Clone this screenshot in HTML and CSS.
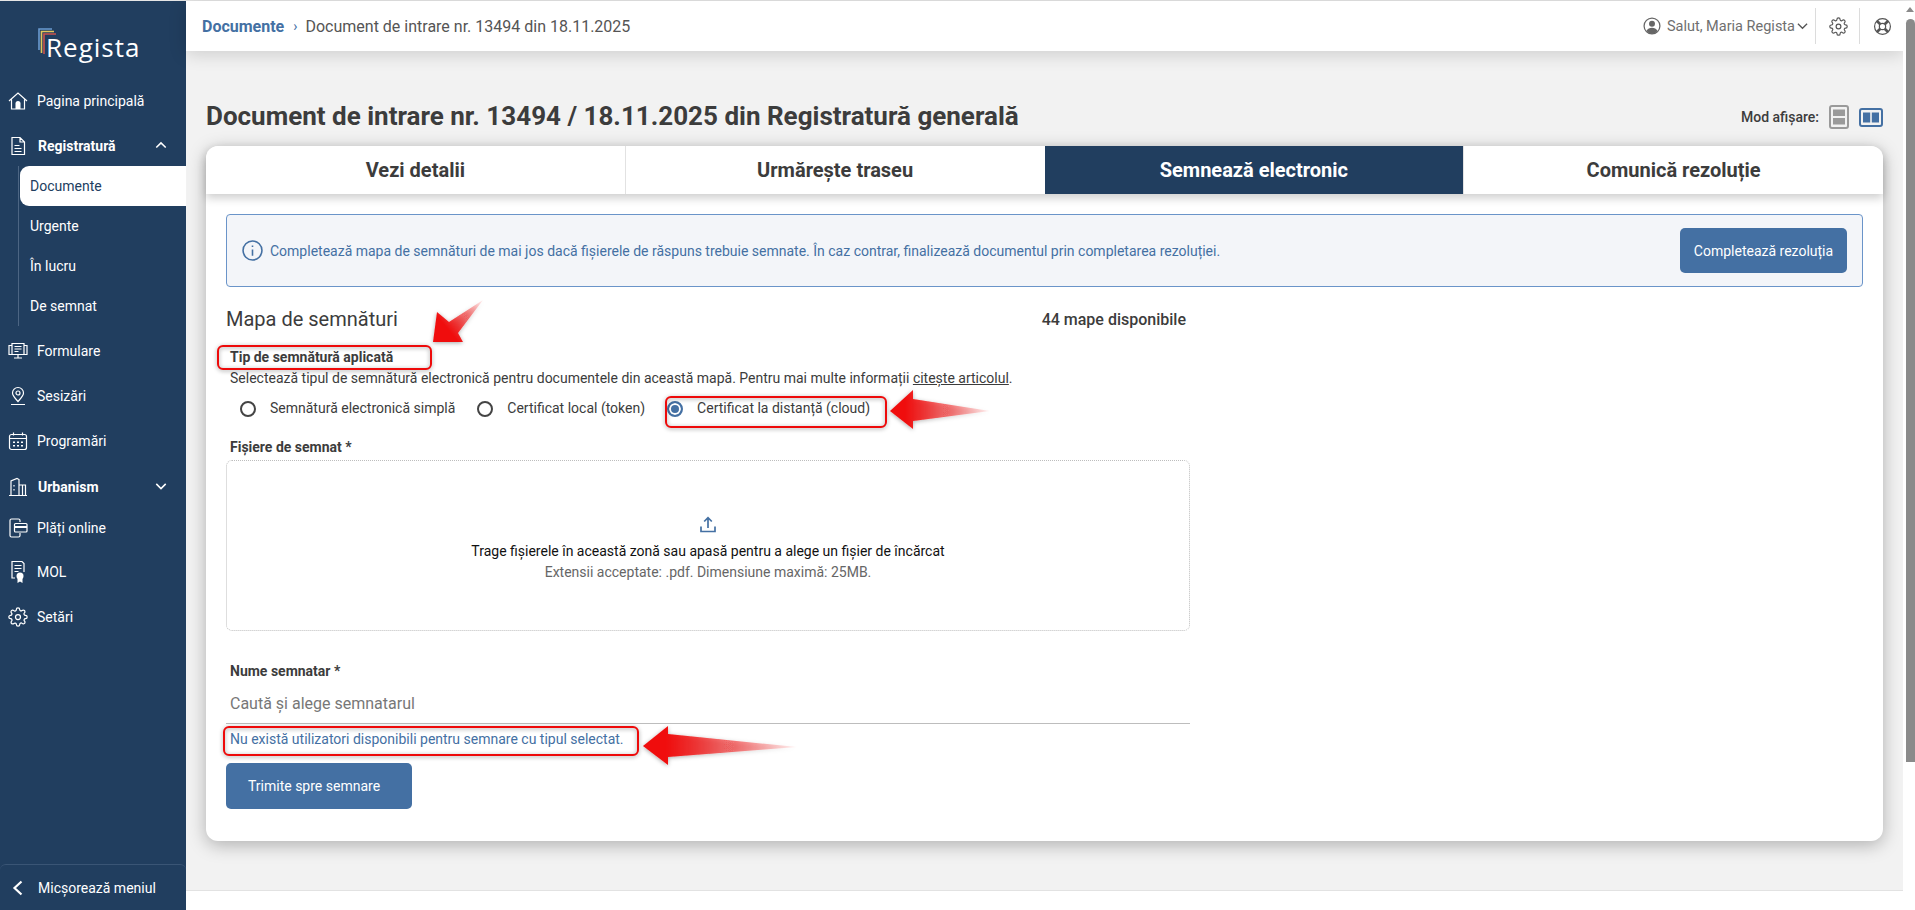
FILE: index.html
```html
<!DOCTYPE html>
<html lang="ro">
<head>
<meta charset="utf-8">
<title>Document de intrare nr. 13494</title>
<link rel="stylesheet" href="styles.css">
</head>
<body>
<svg class="defs" width="0" height="0" aria-hidden="true">
  <defs>
    <symbol id="gear" viewBox="0 0 24 24"><circle cx="12" cy="12" r="3"/><path d="M19.4 15a1.65 1.65 0 0 0 .33 1.82l.06.06a2 2 0 0 1 0 2.83 2 2 0 0 1-2.83 0l-.06-.06a1.65 1.65 0 0 0-1.82-.33 1.65 1.65 0 0 0-1 1.51V21a2 2 0 0 1-2 2 2 2 0 0 1-2-2v-.09A1.65 1.65 0 0 0 9 19.4a1.65 1.65 0 0 0-1.82.33l-.06.06a2 2 0 0 1-2.83 0 2 2 0 0 1 0-2.83l.06-.06a1.65 1.65 0 0 0 .33-1.82 1.65 1.65 0 0 0-1.51-1H3a2 2 0 0 1-2-2 2 2 0 0 1 2-2h.09A1.65 1.65 0 0 0 4.6 9a1.65 1.65 0 0 0-.33-1.82l-.06-.06a2 2 0 0 1 0-2.83 2 2 0 0 1 2.83 0l.06.06a1.65 1.65 0 0 0 1.82.33H9a1.65 1.65 0 0 0 1-1.51V3a2 2 0 0 1 2-2 2 2 0 0 1 2 2v.09a1.65 1.65 0 0 0 1 1.51 1.65 1.65 0 0 0 1.82-.33l.06-.06a2 2 0 0 1 2.83 0 2 2 0 0 1 0 2.83l-.06.06a1.65 1.65 0 0 0-.33 1.82V9a1.65 1.65 0 0 0 1.51 1H21a2 2 0 0 1 2 2 2 2 0 0 1-2 2h-.09a1.65 1.65 0 0 0-1.51 1z"/></symbol>
    <linearGradient id="fade1" gradientUnits="userSpaceOnUse" x1="433" y1="342" x2="483" y2="300"><stop offset="0.3" stop-color="#f00c0c"/><stop offset="1" stop-color="#f00c0c" stop-opacity="0.05"/></linearGradient>
    <linearGradient id="fade2" gradientUnits="userSpaceOnUse" x1="890" y1="411" x2="990" y2="411"><stop offset="0.15" stop-color="#f00c0c"/><stop offset="1" stop-color="#f00c0c" stop-opacity="0.05"/></linearGradient>
    <linearGradient id="fade3" gradientUnits="userSpaceOnUse" x1="643" y1="746" x2="797" y2="746"><stop offset="0.15" stop-color="#f00c0c"/><stop offset="1" stop-color="#f00c0c" stop-opacity="0.05"/></linearGradient>
    <filter id="soft" x="-20%" y="-40%" width="140%" height="180%"><feDropShadow dx="0" dy="1" stdDeviation="2" flood-color="#000" flood-opacity="0.35"/></filter>
  </defs>
</svg>

<div class="app">
  <aside class="sidebar">
    <div class="logo">
      <svg class="logo-mark" width="22" height="28" viewBox="0 0 22 28" fill="none" stroke-width="1.6">
        <path d="M14 1H1v21" stroke="#6a9ad0"/>
        <path d="M16 3.500H3.500V25" stroke="#e3c55a"/>
        <path d="M18 6H6v20" stroke="#c9524f"/>
      </svg>
      <span class="logo-text">Regista</span>
    </div>
    <nav class="nav">
      <a class="nav-item">
        <svg class="ni" viewBox="0 0 20 20"><path d="M1 10 10 2l9 8M3.500 8.500V18h13V8.500"/><path class="solid" d="M7.500 18v-5.500a2.500 2.500 0 0 1 5 0V18z"/></svg>
        <span>Pagina principală</span>
      </a>
      <a class="nav-item nav-group nav-reg">
        <svg class="ni" viewBox="0 0 20 20"><path d="M4 1.500h8l4.500 4.500v12.500H4zM12 1.500V6h4.500M6.500 9.500h5M6.500 12.500h7M6.500 15.500h7"/></svg>
        <span>Registratură</span>
        <svg class="chev" viewBox="0 0 14 8"><path d="M1.500 7 7 1.500 12.500 7"/></svg>
      </a>
      <div class="subnav">
        <a class="sub-item sub-active">Documente</a>
        <a class="sub-item">Urgente</a>
        <a class="sub-item">În lucru</a>
        <a class="sub-item">De semnat</a>
      </div>
      <a class="nav-item nav-after">
        <svg class="ni" viewBox="0 0 20 20"><path d="M4 2.500h12v11H4zM4 4.500H1v9h3M16 4.500h3v9h-3M6.500 5.500h7M6.500 8h7M6.500 10.500h4M10 13.500v3M6 17h8"/></svg>
        <span>Formulare</span>
      </a>
      <a class="nav-item">
        <svg class="ni" viewBox="0 0 20 20"><path d="M10 15.500C7 12 4.500 9.800 4.500 7a5.500 5.500 0 0 1 11 0c0 2.800-2.500 5-5.500 8.500zM3 18.500h14"/><circle cx="10" cy="7" r="2"/></svg>
        <span>Sesizări</span>
      </a>
      <a class="nav-item">
        <svg class="ni" viewBox="0 0 20 20"><rect x="1.500" y="3.500" width="17" height="15" rx="2"/><path d="M1.500 7.500h17M5.500 1.500v3M14.500 1.500v3"/><path class="dots" d="M5 10.500h2v1.500H5zM9 10.500h2v1.500H9zM13 10.500h2v1.500h-2zM5 14h2v1.500H5zM9 14h2v1.500H9zM13 14h2v1.500h-2z"/></svg>
        <span>Programări</span>
      </a>
      <a class="nav-item nav-group nav-urb">
        <svg class="ni" viewBox="0 0 20 20"><path d="M3 18.500V4l6-2.500 2 1v16M11 8h6.500v10.500M1 18.500h18M14.500 8v10.500M6 8v1.500M6 12v1.500"/></svg>
        <span>Urbanism</span>
        <svg class="chev" viewBox="0 0 14 8"><path d="M1.500 1.500 7 7l5.500-5.500"/></svg>
      </a>
      <a class="nav-item nav-pay">
        <svg class="ni" viewBox="0 0 20 20"><path d="M12 4V2.500a1.500 1.500 0 0 0-1.500-1.500h-7A1.500 1.500 0 0 0 2 2.500v15A1.500 1.500 0 0 0 3.500 19h7a1.500 1.500 0 0 0 1.500-1.500V15"/><rect x="6.500" y="5.500" width="12.500" height="8.500" rx="1"/><path class="solid" d="M6.500 8h12.500v2H6.500z"/></svg>
        <span>Plăți online</span>
      </a>
      <a class="nav-item">
        <svg class="ni ni-tall" viewBox="0 0 20 24"><path d="M7 18H4V1.500h10l2 2V12M6.500 5.500h7M6.500 8.500h7M6.500 11.500h4"/><circle class="solid" cx="12" cy="16" r="3.500"/><path class="solid" d="M9.500 18.500v4.500l2.500-1.500 2.500 1.500v-4.500z"/></svg>
        <span>MOL</span>
      </a>
      <a class="nav-item">
        <svg class="ni ni-gear" viewBox="0 0 24 24"><use href="#gear"/></svg>
        <span>Setări</span>
      </a>
    </nav>
    <a class="collapse">
      <svg class="collapse-ic" viewBox="0 0 12 16"><path d="M9.500 1.500 2.500 8l7 6.500"/></svg>
      <span>Micșorează meniul</span>
    </a>
  </aside>

  <div class="main">
    <header class="topbar">
      <div class="crumbs">
        <a class="crumb-link">Documente</a>
        <span class="crumb-sep">›</span>
        <span>Document de intrare nr. 13494 din 18.11.2025</span>
      </div>
      <div class="top-right">
        <svg class="user-ic" viewBox="0 0 20 20"><circle class="ring" cx="10" cy="10" r="8.800"/><circle cx="10" cy="7.500" r="3.300"/><path d="M3.800 15.500C5 12.800 7.500 12 10 12s5 .8 6.200 3.500A8.800 8.800 0 0 1 10 18.800a8.800 8.800 0 0 1-6.200-3.300z"/></svg>
        <span class="hello">Salut, Maria Regista</span>
        <svg class="top-chev" viewBox="0 0 12 8"><path d="M1 1.500 6 6.500l5-5"/></svg>
        <span class="top-btn top-btn-first">
          <svg class="top-ic" viewBox="0 0 24 24"><use href="#gear"/></svg>
        </span>
        <span class="top-btn">
          <svg class="top-ic top-help" viewBox="0 0 24 24"><circle cx="12" cy="12" r="10"/><circle cx="12" cy="12" r="4"/><path class="band" d="M5 5l4.200 4.200M19 5l-4.200 4.200M5 19l4.200-4.200M19 19l-4.200-4.200"/></svg>
        </span>
      </div>
    </header>

    <section class="content">
      <div class="title-row">
        <h1 class="title">Document de intrare nr. 13494 / 18.11.2025 din Registratură generală</h1>
        <div class="mode">
          <span>Mod afișare:</span>
          <svg class="mode-a" viewBox="0 0 20 24"><rect x="1" y="1" width="18" height="22" rx="2"/><path d="M4 4.500h12v6.500H4zM4 13h12v6.500H4z"/></svg>
          <svg class="mode-b" viewBox="0 0 24 19"><rect x="1" y="1" width="22" height="17" rx="2"/><path d="M4 4.500h7.200v10H4zM12.800 4.500H20v10h-7.200z"/></svg>
        </div>
      </div>

      <div class="card">
        <div class="tabs">
          <a class="tab">Vezi detalii</a>
          <a class="tab">Urmărește traseu</a>
          <a class="tab tab-active">Semnează electronic</a>
          <a class="tab">Comunică rezoluție</a>
        </div>
        <div class="card-body">
          <div class="alert">
            <svg class="alert-ic" viewBox="0 0 20 20"><circle cx="10" cy="10" r="9"/><path d="M10 9v6M10 5.200v1.400"/></svg>
            <span class="alert-text">Completează mapa de semnături de mai jos dacă fișierele de răspuns trebuie semnate. În caz contrar, finalizează documentul prin completarea rezoluției.</span>
            <a class="btn btn-alert">Completează rezoluția</a>
          </div>

          <div class="form">
            <div class="form-head">
              <h2 class="form-title">Mapa de semnături</h2>
              <span class="form-count">44 mape disponibile</span>
            </div>
            <div class="label label-type">Tip de semnătură aplicată</div>
            <p class="desc">Selectează tipul de semnătură electronică pentru documentele din această mapă. Pentru mai multe informații <a class="link">citește articolul</a>.</p>
            <div class="radios">
              <label class="radio"><span class="radio-dot"></span>Semnătură electronică simplă</label>
              <label class="radio"><span class="radio-dot"></span>Certificat local (token)</label>
              <label class="radio radio-on"><span class="radio-dot"></span>Certificat la distanță (cloud)</label>
            </div>
            <div class="label label-files">Fișiere de semnat *</div>
            <div class="drop">
              <svg class="drop-ic" viewBox="0 0 16 17"><path d="M8 12V2M4.200 5.500 8 1.700l3.800 3.800M1 10.500v5h14v-5"/></svg>
              <div class="drop-main">Trage fișierele în această zonă sau apasă pentru a alege un fișier de încărcat</div>
              <div class="drop-sub">Extensii acceptate: .pdf. Dimensiune maximă: 25MB.</div>
            </div>
            <div class="label label-name">Nume semnatar *</div>
            <div class="field">Caută și alege semnatarul</div>
            <div class="hint">Nu există utilizatori disponibili pentru semnare cu tipul selectat.</div>
            <a class="btn btn-send">Trimite spre semnare</a>
          </div>
        </div>
      </div>
    </section>

    <footer class="footer"></footer>
  </div>

  <div class="scrollbar">
    <span class="scroll-arrow"></span>
    <span class="scroll-thumb"></span>
  </div>
</div>

<svg class="marks" width="1915" height="910" viewBox="0 0 1915 910" aria-hidden="true">
  <g class="mark-box">
    <rect x="218" y="346" width="213" height="23" rx="5"/>
    <rect x="666" y="397" width="220" height="30" rx="5"/>
    <rect x="224" y="727" width="414" height="28" rx="5"/>
  </g>
  <polygon fill="url(#fade1)" filter="url(#soft)" points="433,342 437,312 449,322 483,300 458,333 463,342"/>
  <polygon fill="url(#fade2)" filter="url(#soft)" points="890,411 913,390 913,399 990,411 913,421 913,429"/>
  <polygon fill="url(#fade3)" filter="url(#soft)" points="643,746 668,726 668,734 797,747 668,757 668,765"/>
</svg>
</body>
</html>
```

FILE: styles.css
```css
* { box-sizing: border-box; }
html, body { margin: 0; height: 100%; overflow: hidden; }
body { font-family: Roboto, "Liberation Sans", sans-serif; font-size: 14px; color: #3c3c3c; background: #f2f2f2; position: relative; }
.defs { position: absolute; }
a { color: inherit; text-decoration: none; }
h1, h2, p { margin: 0; }

.app { display: flex; height: 910px; border-top: 1px solid #e6e6e6; }

/* Sidebar */
.sidebar { width: 186px; flex: none; background: #213e5f; color: #fff; display: flex; flex-direction: column; }
.logo { height: 77px; position: relative; padding: 28px 0 0 46px; }
.logo-mark { position: absolute; left: 38px; top: 27px; }
.logo-text { font-family: "Open Sans", sans-serif; font-weight: 400; font-size: 26px; line-height: 36px; letter-spacing: 1px; position: relative; }
.nav { display: flex; flex-direction: column; }
.nav-item { height: 45px; display: flex; align-items: center; padding-left: 8px; gap: 9px; }
.ni { width: 20px; height: 20px; flex: none; fill: none; stroke: #fff; stroke-width: 1.2; }
.ni .solid { fill: #fff; stroke: none; }
.ni .dots { fill: #fff; stroke: none; }
.ni-gear { stroke-width: 1.5; }
.ni-tall { height: 24px; }
.nav-group { font-weight: 700; position: relative; gap: 10px; padding-top: 2px; }
.nav-reg { height: 42px; margin-top: 1px; }
.nav-urb { height: 40px; margin-top: 3px; }
.nav-pay { height: 43px; }
.chev { position: absolute; left: 155px; top: 50%; width: 12px; height: 8px; margin-top: -4px; fill: none; stroke: #fff; stroke-width: 1.8; }
.subnav { margin-left: 18px; border-left: 1px solid #4c6583; display: flex; flex-direction: column; }
.sub-item { height: 40px; display: flex; align-items: center; padding-left: 11px; }
.sub-active { background: #fff; color: #213e5f; border-radius: 9px 0 0 9px; margin-left: 1px; padding-left: 10px; }
.nav-after { margin-top: 2px; }
.collapse { margin-top: auto; height: 46px; display: flex; align-items: center; gap: 14px; padding-left: 12px; border-top: 1px solid #3a5575; border-radius: 6px 6px 0 0; }
.collapse-ic { width: 12px; height: 16px; flex: none; fill: none; stroke: #fff; stroke-width: 2.2; }

/* Main */
.main { flex: 1; min-width: 0; display: flex; flex-direction: column; }
.topbar { height: 50px; flex: none; background: #fff; display: flex; align-items: center; justify-content: space-between; padding: 0 0 0 16px; box-shadow: 0 3px 18px rgba(0, 0, 0, .16); position: relative; }
.crumbs { display: flex; align-items: center; font-size: 16px; color: #555; }
.crumb-link { font-weight: 700; color: #4470a3; }
.crumb-sep { color: #4470a3; margin: 0 8px 0 9px; font-size: 14px; }
.top-right { display: flex; align-items: center; color: #6f6f6f; }
.user-ic { width: 18px; height: 18px; fill: #666; }
.user-ic .ring { fill: none; stroke: #666; stroke-width: 1.4; }
.hello { margin-left: 6px; font-size: 14.5px; }
.top-chev { width: 11px; height: 8px; margin-left: 2px; fill: none; stroke: #555; stroke-width: 1.4; }
.top-btn { width: 44px; height: 36px; display: flex; align-items: center; justify-content: center; border-left: 1px solid #dcdcdc; padding-left: 2px; }
.top-btn-first { margin-left: 7px; }
.top-ic { width: 19px; height: 19px; fill: none; stroke: #555; stroke-width: 1.5; display: block; }
.top-help .band { stroke-width: 3.4; }

.content { flex: 1; padding: 0 20px; min-height: 0; }
.title-row { height: 95px; display: flex; align-items: flex-end; justify-content: space-between; padding-bottom: 15px; }
.title { font-size: 26px; line-height: 30px; font-weight: 700; color: #3c3c3c; }
.mode { display: flex; align-items: center; font-weight: 500; color: #3c3c3c; font-size: 14px; margin-bottom: 2px; }
.mode-a { width: 20px; height: 24px; margin-left: 10px; fill: none; stroke: #9a9a9a; stroke-width: 2; }
.mode-a path { fill: #9a9a9a; stroke: none; }
.mode-b { width: 24px; height: 19px; margin-left: 10px; fill: none; stroke: #4470a3; stroke-width: 2; }
.mode-b path { fill: #4470a3; stroke: none; }

.card { background: #fff; border-radius: 12px; box-shadow: 0 4px 18px rgba(0, 0, 0, .28); height: 695px; }
.tabs { height: 48px; display: flex; background: #fff; border-radius: 12px 12px 0 0; box-shadow: 0 4px 10px rgba(0, 0, 0, .2); position: relative; overflow: hidden; }
.tab { flex: 1; display: flex; align-items: center; justify-content: center; font-size: 20px; font-weight: 700; color: #3c3c3c; border-left: 1px solid #e2e2e2; }
.tab:first-child { border-left: none; }
.tab-active { background: #213e5f; color: #fff; border-left: none; }

.card-body { padding: 20px; }
.alert { height: 73px; display: flex; align-items: center; border: 1px solid #6a94c9; border-radius: 4px; background: #f3f5f9; padding: 0 15px; color: #4470a3; }
.alert-ic { width: 21px; height: 21px; flex: none; fill: none; stroke: #4470a3; stroke-width: 1.5; }
.alert-text { margin-left: 7px; flex: 1; }
.btn { display: flex; align-items: center; background: #4470a3; color: #fff; border-radius: 5px; }
.btn-alert { width: 167px; height: 45px; justify-content: center; }

.form { width: 964px; }
.form-head { height: 34px; margin-top: 15px; display: flex; align-items: center; justify-content: space-between; padding: 0 4px 0 0; }
.form-title { font-size: 20px; font-weight: 400; color: #3c3c3c; }
.form-count { font-weight: 500; font-size: 16px; }
.label { font-weight: 700; font-size: 14px; line-height: 20px; padding-left: 4px; color: #3c3c3c; }
.label-type { margin-top: 11px; }
.desc { line-height: 20px; padding-left: 4px; margin-top: 1px; }
.link { text-decoration: underline; }
.radios { display: flex; height: 22px; margin-top: 9px; padding-left: 14px; }
.radio { display: flex; align-items: center; margin-right: 22px; }
.radio-dot { width: 16px; height: 16px; border-radius: 50%; border: 2px solid #444; margin: 2px 14px 0 0; flex: none; background: #fff; }
.radio-on .radio-dot { border-color: #4470a3; box-shadow: inset 0 0 0 2px #fff; background: #4470a3; }
.label-files { margin-top: 18px; }
.drop { height: 171px; margin-top: 3px; border: 1px dotted #bdbdbd; border-radius: 6px; display: flex; flex-direction: column; align-items: center; padding-top: 55px; }
.drop-ic { width: 16px; height: 17px; fill: none; stroke: #4470a3; stroke-width: 1.7; }
.drop-main { margin-top: 8px; line-height: 21px; color: #111; }
.drop-sub { line-height: 21px; color: #666; }
.label-name { margin-top: 30px; }
.field { height: 34px; margin-top: 9px; border-bottom: 1px solid #bdbdbd; font-size: 16px; line-height: 28px; color: #777; padding-left: 4px; }
.hint { margin-top: 5px; line-height: 20px; color: #4470a3; padding-left: 4px; }
.btn-send { width: 186px; height: 46px; margin-top: 14px; padding-left: 22px; }

.footer { height: 20px; flex: none; background: #fff; border-top: 1px solid #e2e2e2; }

.scrollbar { width: 12px; flex: none; background: #fff; position: relative; }
.scroll-arrow { position: absolute; left: 3px; top: 6px; width: 0; height: 0; border-left: 4.500px solid transparent; border-right: 4.500px solid transparent; border-bottom: 5px solid #8a8a8a; }
.scroll-thumb { position: absolute; left: 3px; right: 0; top: 18px; height: 743px; background: #8a8a8a; border-radius: 5px 5px 0 0; }

/* Red annotations drawn over the screenshot */
.marks { position: absolute; left: 0; top: 0; pointer-events: none; }
.mark-box rect { fill: none; stroke: #ee0a0a; stroke-width: 2; filter: drop-shadow(0 1px 2px rgba(0, 0, 0, .4)); }
```
